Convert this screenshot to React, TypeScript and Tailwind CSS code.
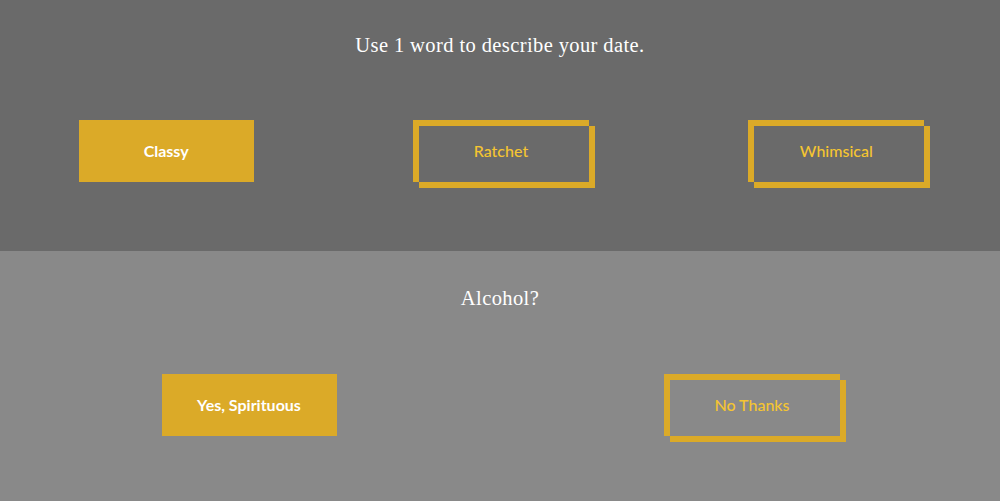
const GOLD = "bg-[#dbaa28]";

function FilledButton({ label }: { label: string }) {
  return (
    <button className={`w-[175px] h-[62px] ${GOLD} text-white font-bold text-[16px] font-['Lato',sans-serif]`}>
      {label}
    </button>
  );
}

function OutlineButton({ label }: { label: string }) {
  return (
    <div className="w-[182px] h-[68px] pl-[6px]">
      <button className="relative w-[176px] h-[62px] -ml-[6px] pr-[6px] pb-[6px] border-t-[6px] border-l-[6px] border-[#dbaa28] text-[#f5c531] text-[16px] font-medium font-['Lato',sans-serif] after:content-[''] after:absolute after:top-0 after:left-0 after:w-[176px] after:h-[62px] after:border-r-[6px] after:border-b-[6px] after:border-[#dbaa28] after:pointer-events-none">
        {label}
      </button>
    </div>
  );
}

function Question({ title, top, children }: { title: string; top: string; children: React.ReactNode }) {
  return (
    <div className={`flex flex-col ${top}`}>
      <h2 className="text-center text-white text-[20.5px] leading-[26px] tracking-[0.4px] font-['Liberation_Serif','DejaVu_Serif',serif]">
        {title}
      </h2>
      {children}
    </div>
  );
}

export default function App() {
  return (
    <div className="w-full min-h-[501px] flex flex-col">
      <section className="h-[251px] bg-[#6a6a6a]">
        <Question title="Use 1 word to describe your date." top="pt-[32px]">
          <div className="grid grid-cols-3 mt-[62px]">
            <div className="flex justify-center pr-[1px]">
              <FilledButton label="Classy" />
            </div>
            <div className="flex justify-center pl-[8px]">
              <OutlineButton label="Ratchet" />
            </div>
            <div className="flex justify-center pl-[12px]">
              <OutlineButton label="Whimsical" />
            </div>
          </div>
        </Question>
      </section>
      <section className="h-[250px] bg-[#898989]">
        <Question title="Alcohol?" top="pt-[34px]">
          <div className="grid grid-cols-2 mt-[63px]">
            <div className="flex justify-center pr-[2px]">
              <FilledButton label="Yes, Spirituous" />
            </div>
            <div className="flex justify-center pl-[10px]">
              <OutlineButton label="No Thanks" />
            </div>
          </div>
        </Question>
      </section>
    </div>
  );
}
